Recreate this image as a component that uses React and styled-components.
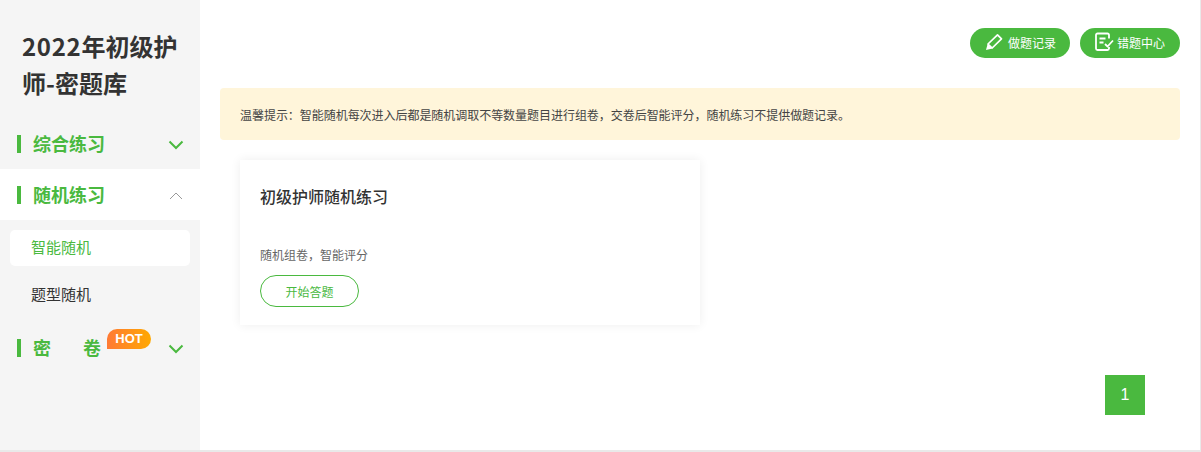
import React from 'react'
import styled, { createGlobalStyle } from 'styled-components'

const GlobalStyle = createGlobalStyle`
  html, body { margin: 0; padding: 0; background: #e9e9e9; }
  body { font-family: "Noto Sans CJK SC", "Noto Sans", sans-serif; }
  * { box-sizing: border-box; }
`

const Page = styled.div`
  display: flex;
  width: 1200px;
  height: 450px;
  background: #fff;
`

const Sidebar = styled.aside`
  width: 200px;
  flex: none;
  background: #f5f5f5;
`

const Title = styled.h1`
  margin: 0;
  padding: 27px 20px 0 22px;
  height: 118px;
  font-size: 24px;
  line-height: 37px;
  font-weight: 700;
  color: #333;
`

const TitleLine = styled.span`
  display: block;
  white-space: nowrap;
`

const Digits = styled.span`
  letter-spacing: 0.7px;
`

const MenuRow = styled.div`
  display: flex;
  align-items: center;
  height: 51px;
  padding: 0 17px;
  background: ${p => (p.$open ? '#fff' : 'transparent')};
`

const Bar = styled.i`
  width: 4px;
  height: 18px;
  background: #4ab93f;
  margin-right: 12px;
`

const MenuLabel = styled.span`
  position: relative;
  flex: 1;
  margin-bottom: 2px;
  font-size: 18px;
  font-weight: 700;
  color: #4ab93f;
  line-height: 24px;
`

const LabelGap = styled.span`
  display: inline-block;
  width: 32px;
`

const Hot = styled.b`
  position: absolute;
  left: 74px;
  top: -6px;
  width: 44px;
  height: 20px;
  border-radius: 10px 10px 10px 0;
  background: linear-gradient(90deg, #ff7a35, #ffa800);
  color: #fff;
  font: 700 13px/20px "Liberation Sans", sans-serif;
  text-align: center;
`

const SubMenu = styled.div`
  padding: 10px 10px 0;
  margin-bottom: -2px;
`

const SubItem = styled.div`
  height: 36px;
  padding-left: 21px;
  margin-bottom: 11px;
  border-radius: 5px;
  font-size: 15px;
  line-height: 34px;
  color: ${p => (p.$active ? '#4ab93f' : '#333')};
  background: ${p => (p.$active ? '#fff' : 'transparent')};
`

const Main = styled.main`
  flex: 1;
  display: flex;
  flex-direction: column;
  padding: 28px 20px 0;
`

const Actions = styled.div`
  display: flex;
  justify-content: flex-end;
  gap: 10px;
  height: 60px;
`

const ActionButton = styled.button`
  display: flex;
  align-items: center;
  width: 100px;
  height: 30px;
  padding: 0 0 2px 15px;
  border: none;
  border-radius: 15px;
  background: #4ab93f;
  color: #fff;
  font-family: inherit;
  font-size: 12px;
`

const PenSvg = styled.svg`
  width: 18px;
  height: 18px;
  margin-right: 5px;
  fill: none;
  stroke: #fff;
  stroke-width: 1.7;
`

const NoteSvg = styled.svg`
  width: 20px;
  height: 20px;
  margin: 0 3px 0 -1px;
  fill: none;
  stroke: #fff;
  stroke-width: 1.8;
`

const Notice = styled.div`
  height: 52px;
  padding-left: 20px;
  border-radius: 4px;
  background: #fff5da;
  color: #444;
  font-size: 12px;
  line-height: 54px;
  letter-spacing: -0.04px;
`

const CardGrid = styled.div`
  display: flex;
  padding: 20px 20px 0;
`

const Card = styled.section`
  width: 460px;
  height: 165px;
  padding: 20px;
  background: #fff;
  box-shadow: 0 0 10px rgba(0, 0, 0, 0.07);
`

const CardTitle = styled.h2`
  margin: 0;
  height: 66px;
  font-size: 16px;
  line-height: 32px;
  font-weight: 500;
  color: #333;
`

const CardText = styled.p`
  margin: 0 0 11px;
  font-size: 12px;
  line-height: 18px;
  color: #666;
`

const StartButton = styled.button`
  display: block;
  width: 99px;
  height: 32px;
  padding: 0;
  border: 1px solid #4ab93f;
  border-radius: 16px;
  background: #fff;
  color: #4ab93f;
  font-family: inherit;
  font-size: 12px;
`

const Pager = styled.div`
  display: flex;
  justify-content: flex-end;
  padding: 50px 35px 0 0;
`

const PageNum = styled.span`
  width: 40px;
  height: 40px;
  background: #4ab93f;
  color: #fff;
  font: 16px/40px "Liberation Sans", sans-serif;
  text-align: center;
`

const Chevron = styled.svg`
  width: 16px;
  height: 10px;
  margin: 2px -1px 0 1px;
  fill: none;
  stroke: ${p => (p.$up ? '#999' : '#4ab93f')};
  stroke-width: ${p => (p.$up ? 1 : 2)};
`

function Arrow({ up }) {
  return (
    <Chevron $up={up} viewBox="0 0 16 10">
      <path d={up ? 'M2 8 8 2l6 6' : 'M1.5 1.5 8 8l6.5-6.5'} />
    </Chevron>
  )
}

function PenIcon() {
  return (
    <PenSvg viewBox="0 0 18 18">
      <path d="M12.500 1.800 16.500 5.800 7.200 15 3 11z" strokeLinejoin="round" />
      <path d="M1 17 2.600 11 7.500 15.600z" fill="#fff" stroke="none" />
    </PenSvg>
  )
}

function NoteIcon() {
  return (
    <NoteSvg viewBox="0 0 20 20">
      <path d="M15 6.500V3A1.500 1.500 0 0 0 13.500 1.500h-10A1.500 1.500 0 0 0 2 3v13.500A1.500 1.500 0 0 0 3.500 18h10a1.500 1.500 0 0 0 1.500-1.500V15" />
      <path d="M5.500 6.500h6M5.500 10.500h4M11 12l2.500 2.500 5.500-6" />
    </NoteSvg>
  )
}

export default function App() {
  return (
    <>
      <GlobalStyle />
      <Page>
        <Sidebar>
          <Title>
            <TitleLine><Digits>2022</Digits>年初级护</TitleLine>
            <TitleLine>师-密题库</TitleLine>
          </Title>
          <MenuRow>
            <Bar />
            <MenuLabel>综合练习</MenuLabel>
            <Arrow />
          </MenuRow>
          <MenuRow $open>
            <Bar />
            <MenuLabel>随机练习</MenuLabel>
            <Arrow up />
          </MenuRow>
          <SubMenu>
            <SubItem $active>智能随机</SubItem>
            <SubItem>题型随机</SubItem>
          </SubMenu>
          <MenuRow>
            <Bar />
            <MenuLabel>
              密<LabelGap />卷
              <Hot>HOT</Hot>
            </MenuLabel>
            <Arrow />
          </MenuRow>
        </Sidebar>
        <Main>
          <Actions>
            <ActionButton><PenIcon />做题记录</ActionButton>
            <ActionButton><NoteIcon />错题中心</ActionButton>
          </Actions>
          <Notice>温馨提示：智能随机每次进入后都是随机调取不等数量题目进行组卷，交卷后智能评分，随机练习不提供做题记录。</Notice>
          <CardGrid>
            <Card>
              <CardTitle>初级护师随机练习</CardTitle>
              <CardText>随机组卷，智能评分</CardText>
              <StartButton>开始答题</StartButton>
            </Card>
          </CardGrid>
          <Pager>
            <PageNum>1</PageNum>
          </Pager>
        </Main>
      </Page>
    </>
  )
}
